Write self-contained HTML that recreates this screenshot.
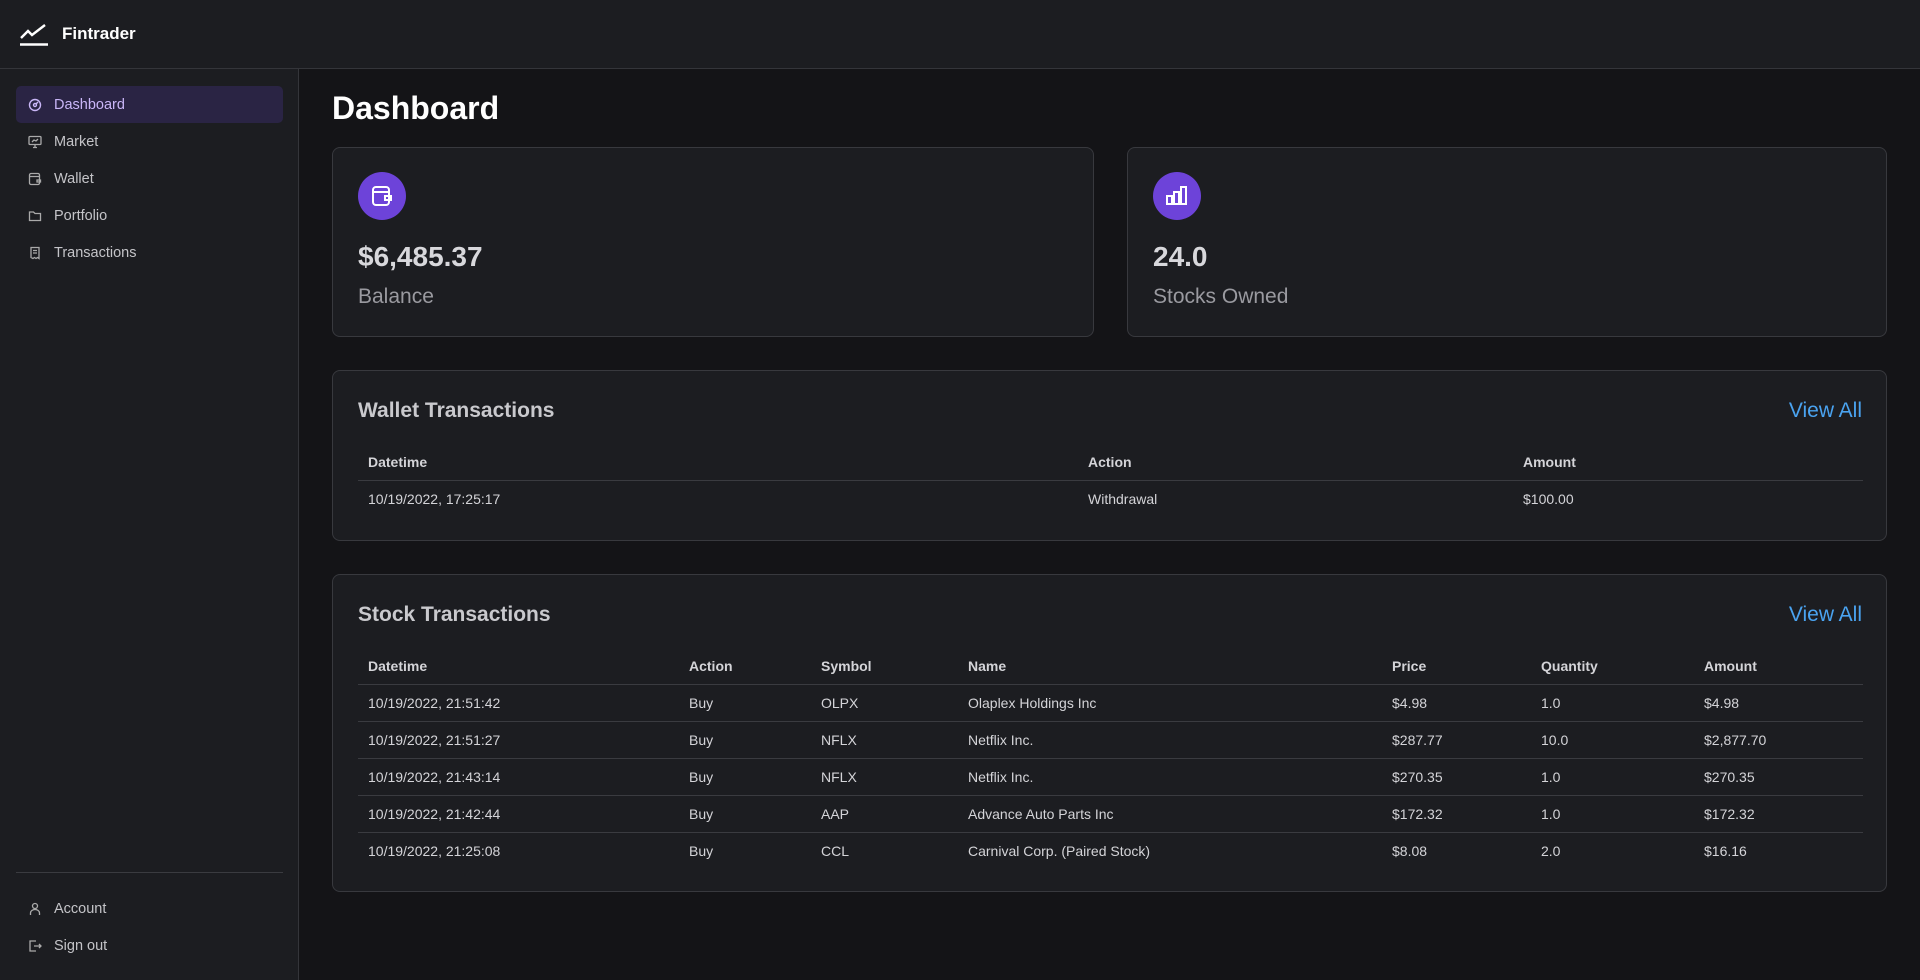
<!DOCTYPE html>
<html><head><meta charset="utf-8"><style>
*{box-sizing:border-box;margin:0;padding:0}
body{width:1920px;height:980px;background:#141417;font-family:"Liberation Sans",sans-serif;color:#d4d4d8;position:relative;overflow:hidden}
.hdr{position:absolute;left:0;top:0;width:1920px;height:69px;background:#1c1d21;border-bottom:1px solid #34353a}
.side{position:absolute;left:0;top:69px;width:299px;height:911px;background:#1c1d21;border-right:1px solid #34353a}
.logo{position:absolute;left:62px;top:24px;font-size:17px;font-weight:bold;color:#fff}
.nav{position:absolute;left:16px;width:267px;height:37px;border-radius:5px;display:flex;align-items:center;font-size:14.5px;color:#c4c4c8}
.nav svg{position:absolute;left:12px;top:12px}
.nav span{position:absolute;left:38px}
.nav.act{background:#2a2444;color:#c9b6f7}
.card{position:absolute;background:#1c1d21;border:1px solid #38393e;border-radius:8px}
.circ{position:absolute;left:25px;top:24px;width:48px;height:48px;border-radius:50%;background:#6d43d9;display:flex;align-items:center;justify-content:center}
.val{position:absolute;left:25px;top:93px;font-size:28px;font-weight:bold;color:#d8d8dc}
.lbl{position:absolute;left:25px;top:137px;font-size:21px;color:#9a9aa0}
h1{position:absolute;left:332px;top:90px;font-size:32px;color:#fff}
.ct{position:absolute;left:25px;top:28px;font-size:21px;font-weight:bold;color:#c9c9cd}
.va{position:absolute;right:24px;top:28px;font-size:21px;color:#4aa3f0}
table{position:absolute;left:25px;top:73px;width:1568px;border-collapse:collapse;font-size:14px}
th{text-align:left;font-weight:bold;color:#d4d4d8;height:36px;padding-left:10px;border-bottom:1px solid #3a3b40}
td{height:37px;padding-left:10px;color:#d4d4d8;border-bottom:1px solid #3a3b40}
tr:last-child td{border-bottom:none}
</style></head><body>
<div class="hdr">
<svg style="position:absolute;left:20px;top:24px" width="28" height="22" viewBox="0 0 28 22" fill="none" stroke="#fff" stroke-width="2.4"><path d="M1 14 L8 7 L12 11 L25 1"/><path d="M0 20.5 H28"/></svg>
<div class="logo">Fintrader</div>
</div>
<div class="side">
<div class="nav act" style="top:17px"><svg width="14" height="14" viewBox="0 0 14 14" fill="none" stroke="#c9b6f7" stroke-width="1.4"><circle cx="7" cy="7" r="5.5"/><circle cx="7" cy="7" r="1.5"/><path d="M8 6 L10 4"/></svg><span>Dashboard</span></div>
<div class="nav" style="top:54px"><svg width="14" height="14" viewBox="0 0 14 14" fill="none" stroke="#aaa" stroke-width="1.3"><rect x="1" y="1.5" width="12" height="8" rx="1"/><path d="M4 7 L6 5 L8 6 L10 4 M5 12.5 H9 M7 9.5 V12.5"/></svg><span>Market</span></div>
<div class="nav" style="top:91px"><svg width="14" height="14" viewBox="0 0 14 14" fill="none" stroke="#aaa" stroke-width="1.3"><rect x="1.5" y="1.5" width="10" height="11" rx="1.5"/><path d="M1.5 4.5 H11.5 M9 8 H12.5 V10 H9 Z"/></svg><span>Wallet</span></div>
<div class="nav" style="top:128px"><svg width="14" height="14" viewBox="0 0 14 14" fill="none" stroke="#aaa" stroke-width="1.3"><path d="M1.5 3 H5.5 L7 4.5 H12.5 V11.5 H1.5 Z"/></svg><span>Portfolio</span></div>
<div class="nav" style="top:165px"><svg width="14" height="14" viewBox="0 0 14 14" fill="none" stroke="#aaa" stroke-width="1.3"><path d="M3 1.5 H11 V12.5 L9.5 11.5 L8 12.5 L6.5 11.5 L5 12.5 L3 11.5 Z M5 4.5 H9 M5 7 H9"/></svg><span>Transactions</span></div>
<div style="position:absolute;left:16px;top:803px;width:267px;height:1px;background:#3a3b40"></div>
<div class="nav" style="top:821px"><svg width="14" height="14" viewBox="0 0 14 14" fill="none" stroke="#aaa" stroke-width="1.3"><circle cx="7" cy="4" r="2.5"/><path d="M2.5 13 V11 A4.5 3.5 0 0 1 11.5 11 V13"/></svg><span>Account</span></div>
<div class="nav" style="top:858px"><svg width="14" height="14" viewBox="0 0 14 14" fill="none" stroke="#aaa" stroke-width="1.3"><path d="M8 2 H2 V12 H8 M6 7 H13 M11 5 L13 7 L11 9"/></svg><span>Sign out</span></div>
</div>
<h1>Dashboard</h1>
<div class="card" style="left:332px;top:147px;width:762px;height:190px">
<div class="circ"><svg width="22" height="22" viewBox="0 0 22 22" fill="none" stroke="#fff" stroke-width="2"><rect x="2" y="2" width="16" height="18" rx="3"/><path d="M2 7 H18 M14 11 H20 V15 H14 Z"/></svg></div>
<div class="val">$6,485.37</div><div class="lbl">Balance</div></div>
<div class="card" style="left:1127px;top:147px;width:760px;height:190px">
<div class="circ"><svg width="24" height="22" viewBox="0 0 24 22" fill="none" stroke="#fff" stroke-width="2"><rect x="2" y="11" width="5" height="8"/><rect x="9" y="7" width="5" height="12"/><rect x="16" y="2" width="5" height="17"/></svg></div>
<div class="val">24.0</div><div class="lbl">Stocks Owned</div></div>
<div class="card" style="left:332px;top:370px;width:1555px;height:171px">
<div class="ct">Wallet Transactions</div><div class="va">View All</div>
<table style="width:1505px"><tr><th style="width:720px">Datetime</th><th style="width:435px">Action</th><th>Amount</th></tr>
<tr><td>10/19/2022, 17:25:17</td><td>Withdrawal</td><td>$100.00</td></tr></table></div>
<div class="card" style="left:332px;top:574px;width:1555px;height:318px">
<div class="ct">Stock Transactions</div><div class="va">View All</div>
<table style="width:1505px"><tr><th style="width:321px">Datetime</th><th style="width:132px">Action</th><th style="width:147px">Symbol</th><th style="width:424px">Name</th><th style="width:149px">Price</th><th style="width:163px">Quantity</th><th>Amount</th></tr>
<tr><td>10/19/2022, 21:51:42</td><td>Buy</td><td>OLPX</td><td>Olaplex Holdings Inc</td><td>$4.98</td><td>1.0</td><td>$4.98</td></tr>
<tr><td>10/19/2022, 21:51:27</td><td>Buy</td><td>NFLX</td><td>Netflix Inc.</td><td>$287.77</td><td>10.0</td><td>$2,877.70</td></tr>
<tr><td>10/19/2022, 21:43:14</td><td>Buy</td><td>NFLX</td><td>Netflix Inc.</td><td>$270.35</td><td>1.0</td><td>$270.35</td></tr>
<tr><td>10/19/2022, 21:42:44</td><td>Buy</td><td>AAP</td><td>Advance Auto Parts Inc</td><td>$172.32</td><td>1.0</td><td>$172.32</td></tr>
<tr><td>10/19/2022, 21:25:08</td><td>Buy</td><td>CCL</td><td>Carnival Corp. (Paired Stock)</td><td>$8.08</td><td>2.0</td><td>$16.16</td></tr></table></div>
</body></html>
